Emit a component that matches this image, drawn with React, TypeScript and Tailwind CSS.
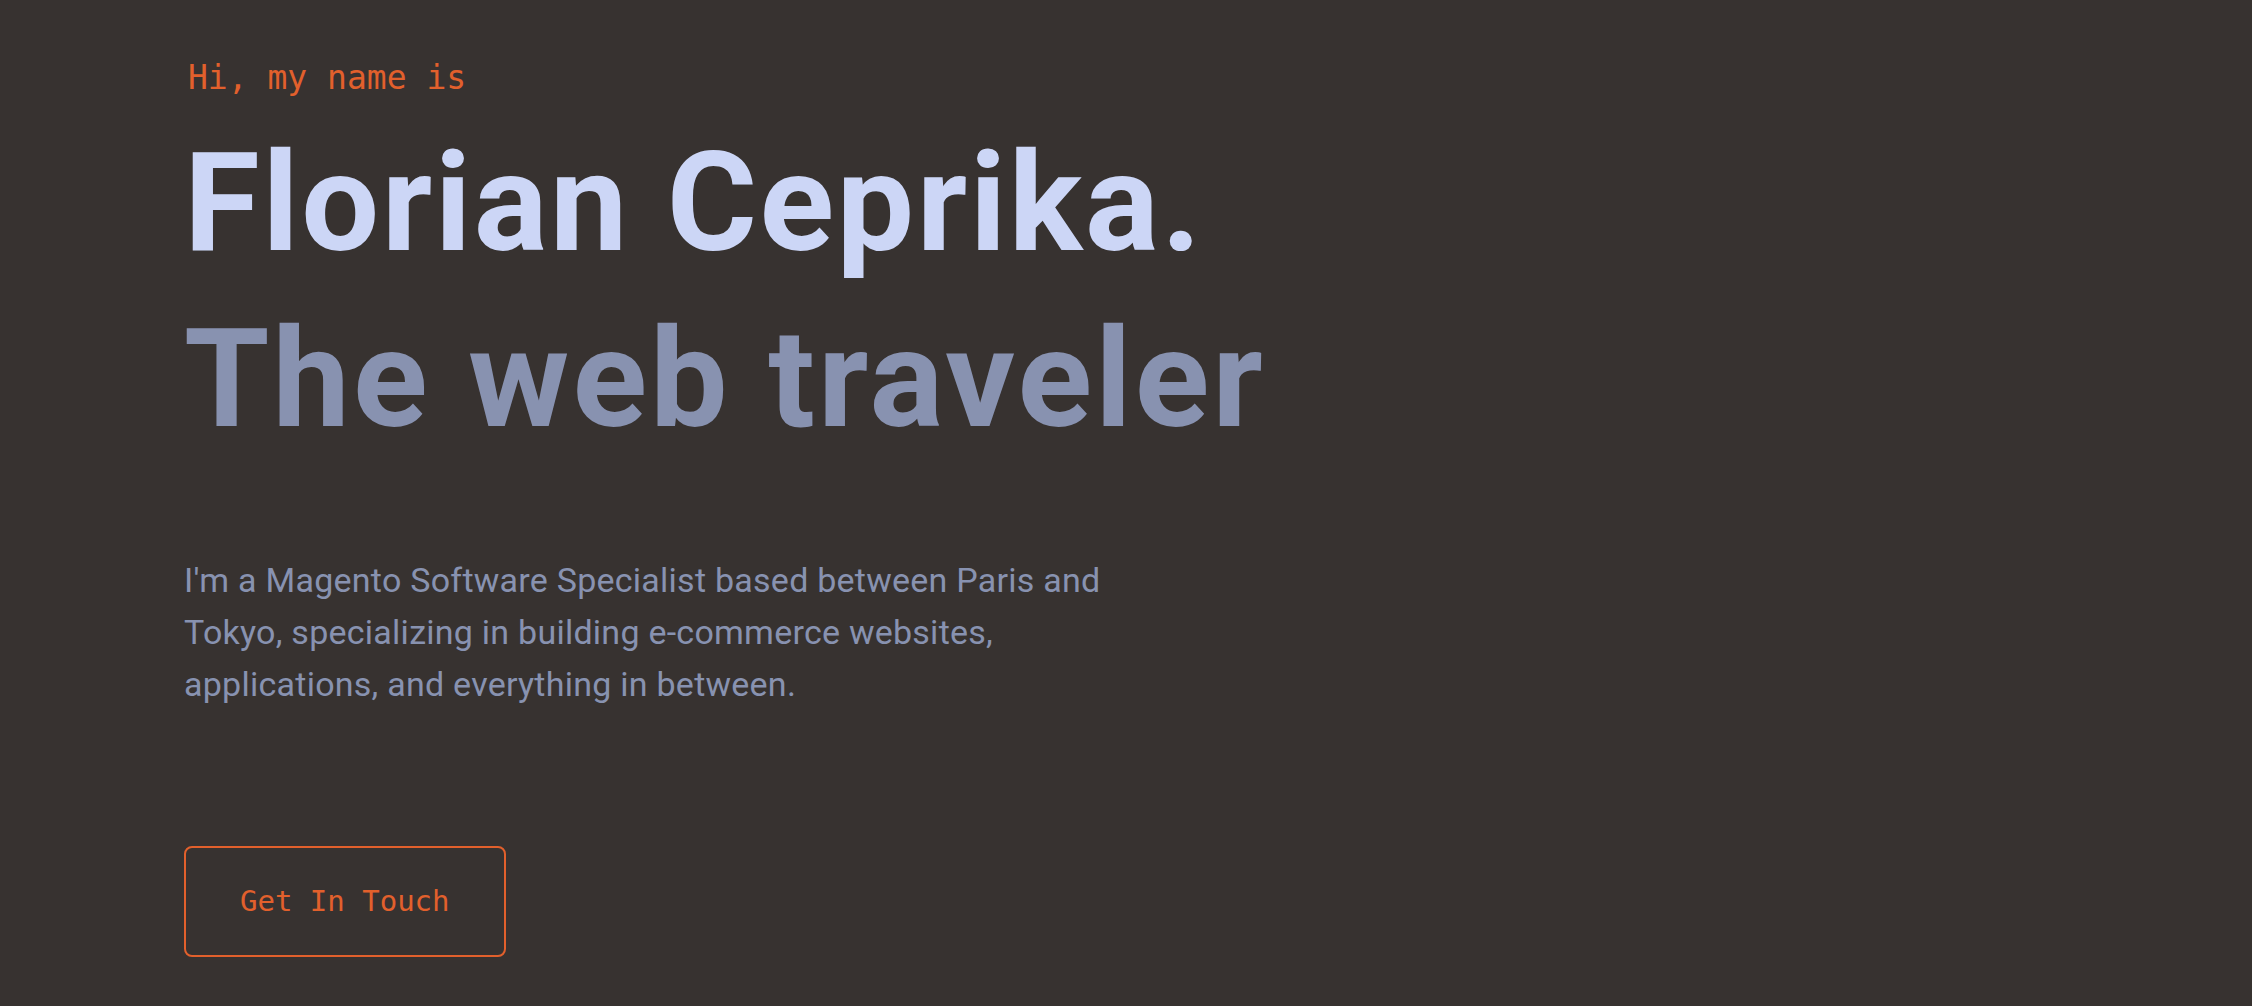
import React from "react";

export default function App() {
  return (
    <div className="min-h-screen w-full overflow-hidden bg-[#373230]">
      <section className="flex flex-col items-start pl-[184px] pt-[58px]">
        <h1 className="ml-[4px] font-[family-name:'DejaVu_Sans_Mono',monospace] text-[33px] leading-[40px] font-normal text-[#e2602c]">
          Hi, my name is
        </h1>
        <h2 className="mt-[17px] font-[family-name:Roboto,'Liberation_Sans',sans-serif] text-[138px] leading-[176px] font-bold tracking-[2.5px] text-[#ccd6f6]">
          Florian Ceprika.
        </h2>
        <h3 className="font-[family-name:Roboto,'Liberation_Sans',sans-serif] text-[138px] leading-[176px] font-bold tracking-[3.1px] text-[#8892b0]">
          The web traveler
        </h3>
        <p className="mt-[87px] font-[family-name:Roboto,'Liberation_Sans',sans-serif] text-[34px] leading-[52px] font-normal tracking-[0.25px] text-[#8892b0]">
          I'm a Magento Software Specialist based between Paris and
          <br />
          Tokyo, specializing in building e-commerce websites,
          <br />
          applications, and everything in between.
        </p>
        <a
          href="#contact"
          className="mt-[136px] rounded-[8px] border-2 border-[#e2602c] px-[54px] py-[39px] font-[family-name:'DejaVu_Sans_Mono',monospace] text-[29px] leading-[29px] text-[#e2602c] no-underline"
        >
          Get In Touch
        </a>
      </section>
    </div>
  );
}
